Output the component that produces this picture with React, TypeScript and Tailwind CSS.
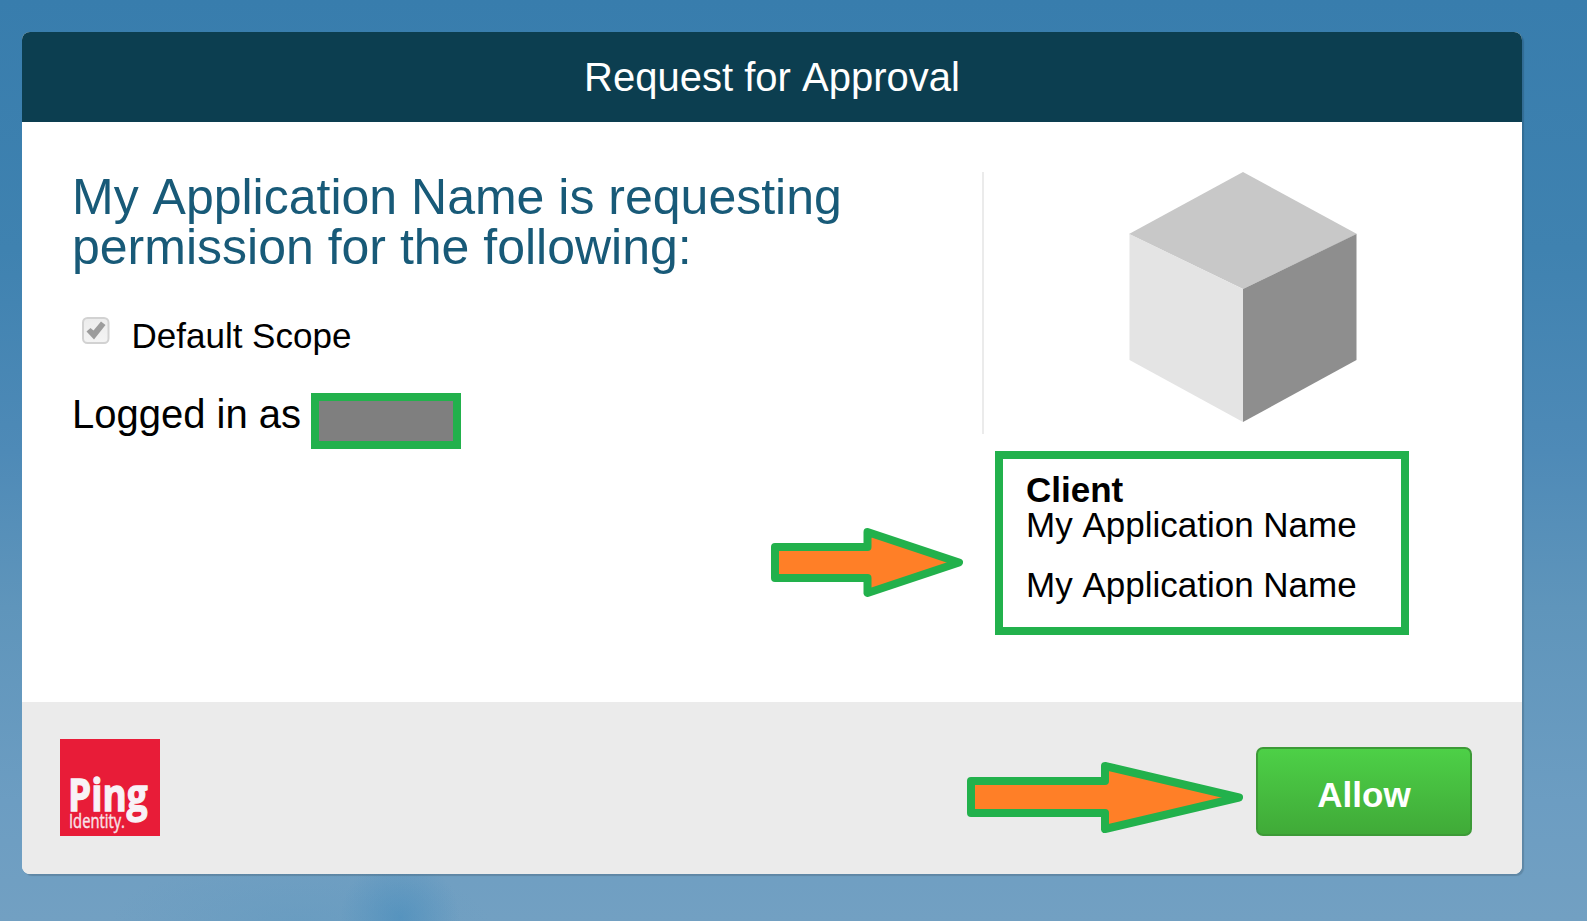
import type { ReactNode } from "react";

function Arrow({ points, width, height, className }: { points: string; width: number; height: number; className: string }) {
  return (
    <svg width={width} height={height} viewBox={`0 0 ${width} ${height}`} className={className} aria-hidden="true">
      <polygon points={points} fill="#ff7f27" stroke="#22b14c" strokeWidth="8" strokeLinejoin="round" />
    </svg>
  );
}

function Cube() {
  return (
    <svg width="228" height="252" viewBox="0 0 228 252" className="block" aria-hidden="true">
      <polygon points="114,0 228,62 114,117 0,62" fill="#c8c8c8" />
      <polygon points="0.5,62 114,117 114,250 0.5,188" fill="#e4e4e4" />
      <polygon points="227.5,62 114,117 114,250 227.5,188" fill="#8e8e8e" />
    </svg>
  );
}

function PingLogo() {
  return (
    <svg width="100" height="97" viewBox="0 0 100 97" className="block" role="img">
      <rect width="100" height="97" fill="#e81c38" />
      <text x="8" y="72" textLength="79.5" lengthAdjust="spacingAndGlyphs" fill="#f8f2f6" stroke="#f8f2f6" strokeWidth="1.3" fontFamily="'Open Sans', sans-serif" fontWeight="700" fontSize="45">
        Ping
      </text>
      <text x="9" y="89" textLength="56" lengthAdjust="spacingAndGlyphs" fill="#f8e4ea" stroke="#f8e4ea" strokeWidth="0.4" fontFamily="'Open Sans', sans-serif" fontWeight="400" fontSize="20">
        Identity.
      </text>
    </svg>
  );
}

function Checkbox() {
  return (
    <svg width="28" height="28" viewBox="0 0 28 28" className="mt-[5px] block" role="img">
      <defs>
        <linearGradient id="box" x1="0" y1="0" x2="0" y2="1">
          <stop offset="0" stopColor="#ececec" />
          <stop offset="1" stopColor="#f4f4f4" />
        </linearGradient>
      </defs>
      <rect x="1" y="1" width="25.5" height="25" rx="4.5" fill="url(#box)" stroke="#d2d2d2" strokeWidth="2" />
      <path d="M4.5 14.5 L8.5 11 L11.5 13.5 L19 4.5 L23.5 8 L12 22.5 Z" fill="#9c9c9c" />
    </svg>
  );
}

function Line({ children }: { children: ReactNode }) {
  return <p className="text-[35px] leading-[35px]">{children}</p>;
}

export default function App() {
  return (
    <div className="relative h-[921px] w-[1587px] overflow-hidden bg-[radial-gradient(ellipse_60px_60px_at_400px_918px,rgba(70,140,188,0.6),transparent),radial-gradient(ellipse_190px_60px_at_300px_921px,rgba(90,150,190,0.35),transparent),linear-gradient(#387dad,#3f82b0_27%,#4e8ab7_49%,#5f95bb_66%,#6c9dc2_87%,#72a0c2)] pt-8 pl-[22px] font-['Liberation_Sans',Arial,sans-serif] text-black [font-kerning:none]">
      <main className="flex h-[842px] w-[1500px] flex-col overflow-hidden rounded-lg bg-white shadow-[2px_2px_1px_rgba(0,0,0,0.15)]">
        <header className="flex h-[90px] items-center justify-center bg-[#0c3e50]">
          <h1 className="text-[40px] leading-[46px] text-white">Request for Approval</h1>
        </header>
        <div className="flex h-[580px] pt-[50px] pl-[50px]">
          <section className="h-[262px] w-[912px] border-r-2 border-[#ebebeb]">
            <h2 className="w-[800px] text-[50px] leading-[50px] text-[#185a78]">
              My Application Name is requesting permission for the following:
            </h2>
            <div className="mt-[40px] flex h-[60px] items-start gap-[21.5px] pl-[10px]">
              <Checkbox />
              <span className="pt-[4px] text-[35px] leading-[40px]">Default Scope</span>
            </div>
            <div className="mt-[21px] flex items-start">
              <span className="mt-[-2px] w-[239px] whitespace-nowrap text-[40px] leading-[46px]">Logged in as</span>
              <span className="h-14 w-[150px] border-8 border-[#22b14c] bg-[#7f7f7f]" />
            </div>
          </section>
          <aside className="pl-[11px]">
            <div className="pl-[134px]">
              <Cube />
            </div>
            <div className="mt-[27px] h-[184px] w-[414px] border-8 border-[#22b14c] pt-[13px] pl-[23px]">
              <h3 className="text-[35px] leading-[35px] font-bold">Client</h3>
              <Line>My Application Name</Line>
              <div className="mt-[25px]">
                <Line>My Application Name</Line>
              </div>
            </div>
          </aside>
        </div>
        <footer className="flex flex-1 items-start justify-between bg-[#ebebeb] pr-[50px] pl-[38px]">
          <div className="pt-[37px]">
            <PingLogo />
          </div>
          <button className="mt-[45px] flex h-[89px] w-[216px] items-center justify-center rounded-[7px] border-2 border-[#3d9a37] bg-linear-to-b from-[#4dd047] to-[#40aa38] pt-[7px] text-[35px] leading-[40px] font-bold text-white">
            Allow
          </button>
        </footer>
      </main>
      <Arrow width={200} height={80} points="8,20 100.5,20 100.5,5 192,35.5 100.5,66 100.5,51 8,51" className="absolute top-[527px] left-[767px]" />
      <Arrow width={285} height={80} points="8,21 142,21 142,6 276,37.5 142,69 142,53 8,53" className="absolute top-[760px] left-[963px]" />
    </div>
  );
}
